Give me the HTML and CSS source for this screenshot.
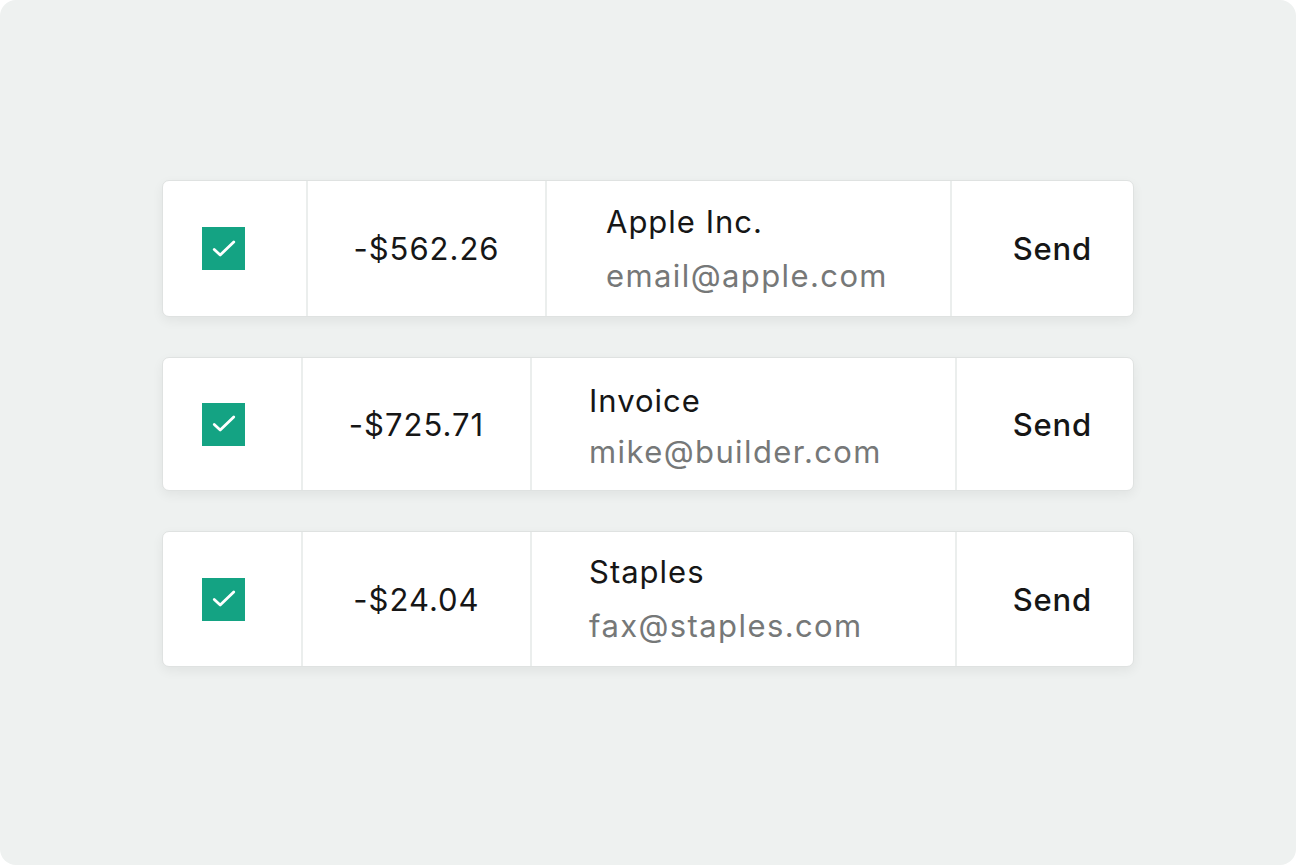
FILE: index.html
```html
<!DOCTYPE html>
<html>
<head>
<meta charset="utf-8">
<link rel="stylesheet" href="styles.css">
</head>
<body>
<div class="panel">
  <div class="list">
    <div class="row row-a">
      <div class="cell cell-check"><span class="check"><svg viewBox="0 0 24 24"><path d="M3 12.5 L8.5 17.5 L21 5.5" fill="none" stroke="#fff" stroke-width="2.6" stroke-linecap="round" stroke-linejoin="round"/></svg></span></div>
      <div class="cell cell-amount">-$562.26</div>
      <div class="cell cell-name"><div class="name">Apple Inc.</div><div class="email">email@apple.com</div></div>
      <div class="cell cell-send">Send</div>
    </div>
    <div class="row row-b">
      <div class="cell cell-check"><span class="check"><svg viewBox="0 0 24 24"><path d="M3 12.5 L8.5 17.5 L21 5.5" fill="none" stroke="#fff" stroke-width="2.6" stroke-linecap="round" stroke-linejoin="round"/></svg></span></div>
      <div class="cell cell-amount">-$725.71</div>
      <div class="cell cell-name"><div class="name">Invoice</div><div class="email">mike@builder.com</div></div>
      <div class="cell cell-send">Send</div>
    </div>
    <div class="row row-c">
      <div class="cell cell-check"><span class="check"><svg viewBox="0 0 24 24"><path d="M3 12.5 L8.5 17.5 L21 5.5" fill="none" stroke="#fff" stroke-width="2.6" stroke-linecap="round" stroke-linejoin="round"/></svg></span></div>
      <div class="cell cell-amount">-$24.04</div>
      <div class="cell cell-name"><div class="name">Staples</div><div class="email">fax@staples.com</div></div>
      <div class="cell cell-send">Send</div>
    </div>
  </div>
</div>
</body>
</html>
```
FILE: styles.css
```css
html, body {
  margin: 0;
  padding: 0;
  background: #ffffff;
}
body {
  font-family: Inter, "Liberation Sans", sans-serif;
  width: 1296px;
  height: 865px;
  overflow: hidden;
}
.panel {
  width: 1296px;
  height: 865px;
  background: #eef1f0;
  border-radius: 16px;
  box-sizing: border-box;
  padding-top: 180px;
}
.list {
  width: 972px;
  margin: 0 auto;
  display: flex;
  flex-direction: column;
  gap: 40px;
}
.row {
  display: grid;
  background: #ffffff;
  border: 1px solid #dfe2e1;
  border-radius: 7px;
  box-shadow: 0 4px 12px rgba(0, 0, 0, 0.06);
  box-sizing: border-box;
}
.row-a {
  height: 137px;
  grid-template-columns: 143px 239px 405px 1fr;
}
.row-b {
  height: 134px;
  grid-template-columns: 138px 229px 425px 1fr;
}
.row-c {
  height: 136px;
  grid-template-columns: 138px 229px 425px 1fr;
}
.cell {
  display: flex;
  align-items: center;
  border-left: 2px solid #ebeeed;
  font-size: 31px;
  letter-spacing: 1px;
  color: #161616;
}
.cell-check {
  border-left: none;
  padding-left: 39px;
}
.check {
  width: 43px;
  height: 43px;
  background: #14a383;
  display: flex;
  align-items: center;
  justify-content: center;
}
.check svg {
  width: 26px;
  height: 26px;
  flex: none;
}
.cell-amount {
  justify-content: center;
}
.cell-name {
  flex-direction: column;
  align-items: flex-start;
  justify-content: center;
  padding-left: 57px;
  line-height: 54px;
}
.row-a .cell-name {
  padding-left: 59px;
}
.row-b .cell-name {
  padding-top: 4px;
  line-height: 51px;
}
.email {
  color: #767878;
  letter-spacing: 1.4px;
}
.cell-send {
  justify-content: flex-end;
  padding-right: 41px;
  font-weight: 500;
  letter-spacing: 0.8px;
}
```
